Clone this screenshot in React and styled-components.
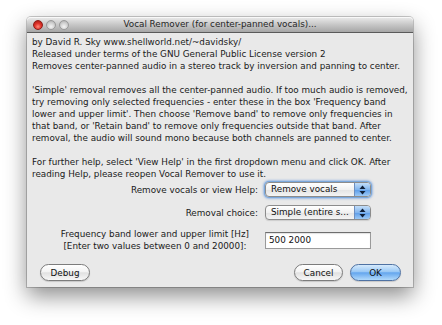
import React from "react";
import styled, { createGlobalStyle } from "styled-components";

const GlobalStyle = createGlobalStyle`
  html, body { margin: 0; padding: 0; background: #ffffff; }
  body { font-family: "DejaVu Sans", "Liberation Sans", sans-serif; font-size: 8.8px; color: #1a1a1a; }
`;

const Page = styled.div`
  width: 442px;
  height: 325px;
  padding: 17px 0 0 27px;
  box-sizing: border-box;
  overflow: hidden;
`;

const Window = styled.div`
  width: 386px;
  height: 270px;
  display: flex;
  flex-direction: column;
  background: #e9e9e9;
  border-radius: 4px 4px 0 0;
  box-shadow: 0 0 0 1px rgba(0, 0, 0, 0.2), 0 9px 22px rgba(0, 0, 0, 0.45);
`;

const TitleBar = styled.div`
  height: 15px;
  flex: none;
  display: grid;
  grid-template-columns: 1fr auto 1fr;
  align-items: center;
  background: linear-gradient(#ececec, #c4c4c4 55%, #a6a6a6);
  border-bottom: 1px solid #5a5a5a;
  border-radius: 4px 4px 0 0;
  box-shadow: inset 0 1px 0 rgba(255, 255, 255, 0.7);
`;

const Lights = styled.div`
  display: flex;
  gap: 3px;
  padding-left: 6px;
`;

const Light = styled.span`
  width: 10px;
  height: 10px;
  border-radius: 50%;
  box-sizing: border-box;
  border: 1px solid ${(p) => (p.$red ? "#8e1c17" : "#9a9a9a")};
  background: ${(p) =>
    p.$red
      ? "radial-gradient(circle at 50% 70%, #ff8a7a 0%, #e2342b 45%, #9c1812 100%)"
      : "radial-gradient(circle at 50% 70%, #f4f4f4 0%, #d2d2d2 50%, #a9a9a9 100%)"};
`;

const Title = styled.div`
  font-size: 8.8px;
  color: #262626;
  white-space: nowrap;
  line-height: 15px;
`;

const Body = styled.div`
  flex: 1;
  display: flex;
  flex-direction: column;
  padding: 3px 12px 0 5px;
`;

const Paragraph = styled.div`
  line-height: 12px;
  & + & {
    margin-top: 12px;
  }
`;

const Line = styled.div`
  white-space: nowrap;
`;

const Form = styled.div`
  display: grid;
  grid-template-columns: 226px 106px;
  column-gap: 7px;
  row-gap: 8px;
  margin-top: 2px;
  align-items: center;
`;

const Label = styled.div`
  justify-self: end;
  white-space: nowrap;
  line-height: 12px;
  text-align: ${(p) => (p.$center ? "center" : "right")};
  margin-right: ${(p) => (p.$center ? "9px" : "0")};
`;

const Popup = styled.div`
  height: 15px;
  box-sizing: border-box;
  border: 1px solid #8c8c8c;
  border-radius: 4px;
  background: linear-gradient(#ffffff, #f1f1f1 50%, #e3e3e3 51%, #f4f4f4);
  display: flex;
  align-items: center;
  box-shadow: ${(p) =>
    p.$focused ? "0 0 0 1px #7ba8dc, 0 0 2px 2px rgba(98, 150, 220, 0.55)" : "0 1px 1px rgba(0,0,0,0.12)"};
`;

const PopupText = styled.span`
  flex: 1;
  padding-left: 5px;
  white-space: nowrap;
  overflow: hidden;
  line-height: 13px;
  color: #111;
`;

const Stepper = styled.span`
  width: 15px;
  align-self: stretch;
  display: flex;
  align-items: center;
  justify-content: center;
  border-left: 1px solid #6c8ec0;
  border-radius: 0 3px 3px 0;
  background: linear-gradient(#c3def9, #82b5ee 50%, #5a9be8 51%, #9cc9f6);
`;

const TextField = styled.div`
  height: 17px;
  box-sizing: border-box;
  margin-top: 1px;
  border: 1px solid #9a9a9a;
  border-top-color: #6e6e6e;
  background: #ffffff;
  padding-left: 3px;
  line-height: 15px;
  color: #111;
  box-shadow: inset 0 1px 1px rgba(0, 0, 0, 0.12);
`;

const ButtonBar = styled.div`
  display: flex;
  align-items: center;
  gap: 7px;
  margin-top: 12px;
  padding-left: 8px;
`;

const Spacer = styled.div`
  flex: 1;
`;

const Button = styled.div`
  width: ${(p) => p.$w}px;
  height: 17px;
  box-sizing: border-box;
  border-radius: 9px;
  display: flex;
  align-items: center;
  justify-content: center;
  font-size: 8.8px;
  color: #111;
  border: 1px solid ${(p) => (p.$default ? "#4f72a3" : "#7c7c7c")};
  background: ${(p) =>
    p.$default
      ? "linear-gradient(#d6eafc, #99c8f5 45%, #64a6ee 52%, #b2dafb)"
      : "linear-gradient(#ffffff, #f3f3f3 45%, #e1e1e1 52%, #f7f7f7)"};
  box-shadow: 0 1px 1px rgba(0, 0, 0, 0.15);
`;

const Arrows = () => (
  <svg width="7" height="10" viewBox="0 0 7 10">
    <path d="M3.5 0.5 L6.5 4 L0.5 4 Z" fill="#0f1f38" />
    <path d="M3.5 9.5 L6.5 6 L0.5 6 Z" fill="#0f1f38" />
  </svg>
);

export default function App() {
  return (
    <Page>
      <GlobalStyle />
      <Window>
        <TitleBar>
          <Lights>
            <Light $red />
            <Light />
            <Light />
          </Lights>
          <Title>Vocal Remover (for center-panned vocals)...</Title>
          <span />
        </TitleBar>
        <Body>
          <Paragraph>
            <Line>by David R. Sky www.shellworld.net/~davidsky/</Line>
            <Line>Released under terms of the GNU General Public License version 2</Line>
            <Line>Removes center-panned audio in a stereo track by inversion and panning to center.</Line>
          </Paragraph>
          <Paragraph>
            <Line>'Simple' removal removes all the center-panned audio. If too much audio is removed,</Line>
            <Line>try removing only selected frequencies - enter these in the box 'Frequency band</Line>
            <Line>lower and upper limit'. Then choose 'Remove band' to remove only frequencies in</Line>
            <Line>that band, or 'Retain band' to remove only frequencies outside that band. After</Line>
            <Line>removal, the audio will sound mono because both channels are panned to center.</Line>
          </Paragraph>
          <Paragraph>
            <Line>For further help, select 'View Help' in the first dropdown menu and click OK. After</Line>
            <Line>reading Help, please reopen Vocal Remover to use it.</Line>
          </Paragraph>
          <Form>
            <Label>Remove vocals or view Help:</Label>
            <Popup $focused>
              <PopupText>Remove vocals</PopupText>
              <Stepper>
                <Arrows />
              </Stepper>
            </Popup>
            <Label>Removal choice:</Label>
            <Popup>
              <PopupText>Simple (entire s...</PopupText>
              <Stepper>
                <Arrows />
              </Stepper>
            </Popup>
            <Label $center>
              Frequency band lower and upper limit [Hz]
              <br />
              [Enter two values between 0 and 20000]:
            </Label>
            <TextField>500 2000</TextField>
          </Form>
          <ButtonBar>
            <Button $w={50}>Debug</Button>
            <Spacer />
            <Button $w={49}>Cancel</Button>
            <Button $w={51} $default>
              OK
            </Button>
          </ButtonBar>
        </Body>
      </Window>
    </Page>
  );
}
